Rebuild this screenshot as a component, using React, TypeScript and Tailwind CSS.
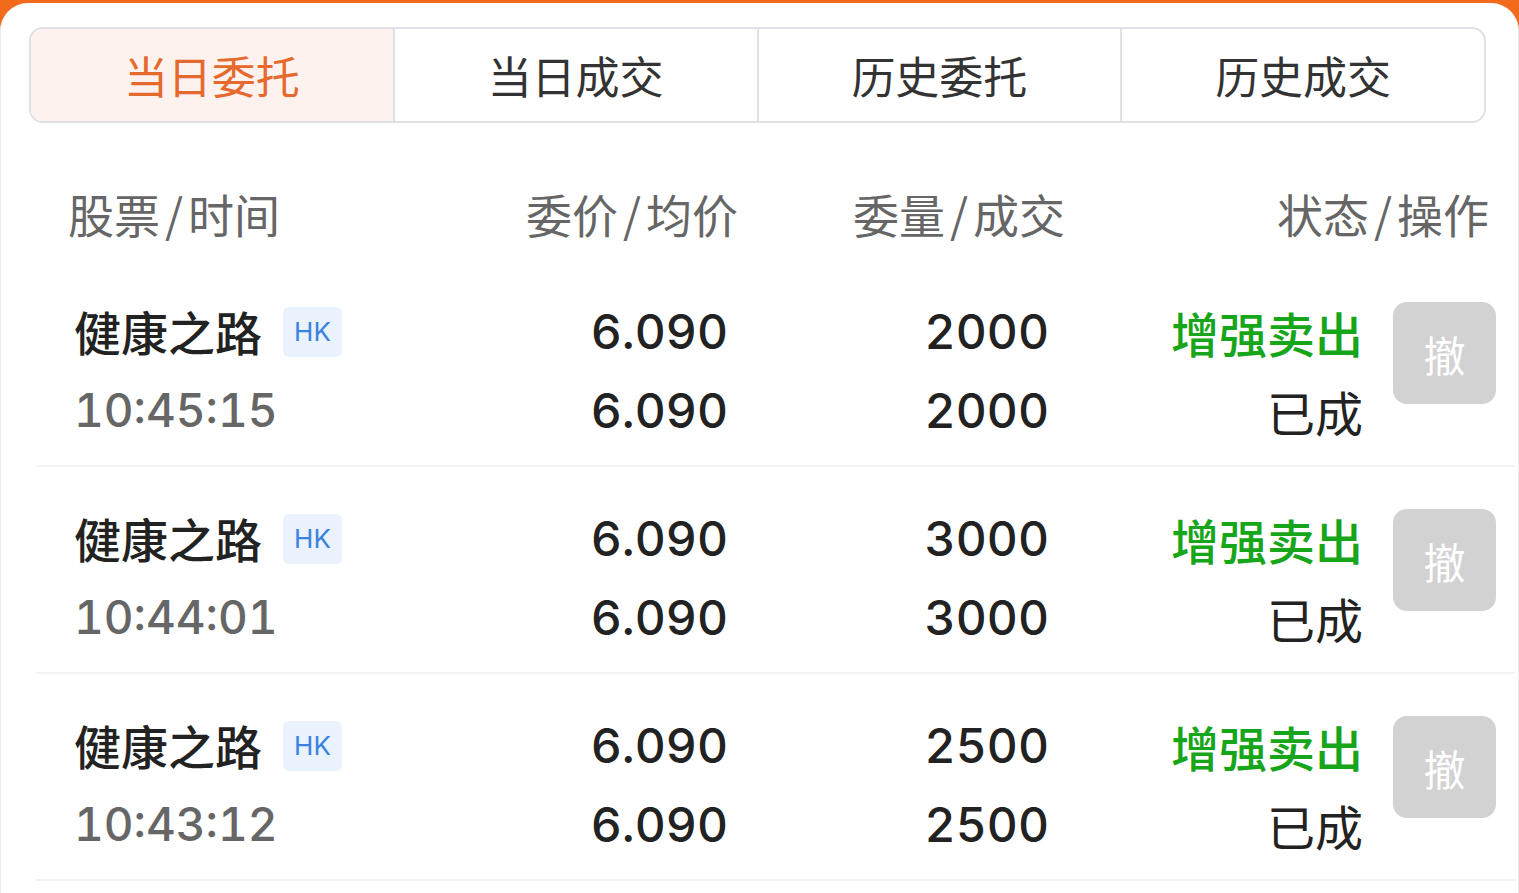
import React from 'react'

const cjk = '"Noto Sans CJK SC", "Noto Sans", sans-serif'
const num = 'Inter, "Noto Sans CJK SC", sans-serif'

const tabs = ['当日委托', '当日成交', '历史委托', '历史成交']

interface Order {
  name: string
  time: string
  price: string
  avg: string
  qty: string
  filled: string
}

const orders: Order[] = [
  { name: '健康之路', time: '10:45:15', price: '6.090', avg: '6.090', qty: '2000', filled: '2000' },
  { name: '健康之路', time: '10:44:01', price: '6.090', avg: '6.090', qty: '3000', filled: '3000' },
  { name: '健康之路', time: '10:43:12', price: '6.090', avg: '6.090', qty: '2500', filled: '2500' },
]

function Head({ a, b }: { a: string; b: string }) {
  return (
    <>
      {a}
      <span className="mx-[5px]">/</span>
      {b}
    </>
  )
}

function OrderRow({ o }: { o: Order }) {
  return (
    <div className="flex h-[207px] border-b-2 border-[#f3f3f3] pl-[38px]">
      <div className="flex w-[407px] flex-col pt-[32px]">
        <div className="flex h-[79px] items-center">
          <span className="text-[47px] font-medium text-[#222]" style={{ fontFamily: cjk }}>
            {o.name}
          </span>
          <span
            className="ml-[21px] flex h-[50px] w-[59px] items-center justify-center rounded-[6px] bg-[#e9f2fd] text-[26px] text-[#3b82e0]"
            style={{ fontFamily: num }}
          >
            HK
          </span>
        </div>
        <div
          className="flex h-[79px] items-center text-[46px] font-medium tabular-nums text-[#666]"
          style={{ fontFamily: num }}
        >
          {o.time}
        </div>
      </div>
      <div
        className="flex w-[247px] flex-col items-end pt-[32px] text-[48px] font-medium tabular-nums text-[#222]"
        style={{ fontFamily: num }}
      >
        <div className="flex h-[79px] items-center">{o.price}</div>
        <div className="flex h-[79px] items-center">{o.avg}</div>
      </div>
      <div
        className="flex w-[321px] flex-col items-end pt-[32px] text-[48px] font-medium tabular-nums text-[#222]"
        style={{ fontFamily: num }}
      >
        <div className="flex h-[79px] items-center">{o.qty}</div>
        <div className="flex h-[79px] items-center">{o.filled}</div>
      </div>
      <div className="flex w-[314px] flex-col items-end pt-[32px] text-[48px]" style={{ fontFamily: cjk }}>
        <div className="flex h-[79px] items-center font-medium text-[#17a51a]">增强卖出</div>
        <div className="flex h-[79px] items-center text-[#222]">已成</div>
      </div>
      <div className="ml-[30px] pt-[42px]">
        <button
          type="button"
          className="flex h-[102px] w-[103px] items-center justify-center rounded-[14px] bg-[#d2d2d2] text-[42px] text-white"
          style={{ fontFamily: cjk }}
        >
          撤
        </button>
      </div>
    </div>
  )
}

export default function App() {
  return (
    <div className="min-h-[893px] w-full bg-[#f26b1d]">
      <div className="min-h-[890px] translate-y-[3px] rounded-t-[28px] border-x border-[#ededed] bg-white">
        <div className="px-[28px] pr-[32px] pt-[24px]">
          <div className="flex h-[96px] overflow-hidden rounded-[14px] border-2 border-[#e0e1e6]">
            {tabs.map((t, i) => (
              <div
                key={t}
                className={
                  i === 0
                    ? 'flex flex-1 items-center justify-center bg-[#fdf2ee] text-[44px] text-[#e6692e]'
                    : 'flex flex-1 items-center justify-center border-l-2 border-[#dfe0e5] text-[44px] text-[#333]'
                }
                style={{ fontFamily: cjk }}
              >
                {t}
              </div>
            ))}
          </div>
        </div>

        <div className="flex h-[137px] pl-[67px] pt-[62px] text-[46px] leading-[56px] text-[#666]" style={{ fontFamily: cjk }}>
          <div className="w-[413px]">
            <Head a="股票" b="时间" />
          </div>
          <div className="w-[257px] text-right">
            <Head a="委价" b="均价" />
          </div>
          <div className="w-[327px] text-right">
            <Head a="委量" b="成交" />
          </div>
          <div className="w-[424px] text-right">
            <Head a="状态" b="操作" />
          </div>
        </div>

        <div className="ml-[35px] mr-[3px]">
          {orders.map((o) => (
            <OrderRow key={o.time} o={o} />
          ))}
        </div>
      </div>
    </div>
  )
}
